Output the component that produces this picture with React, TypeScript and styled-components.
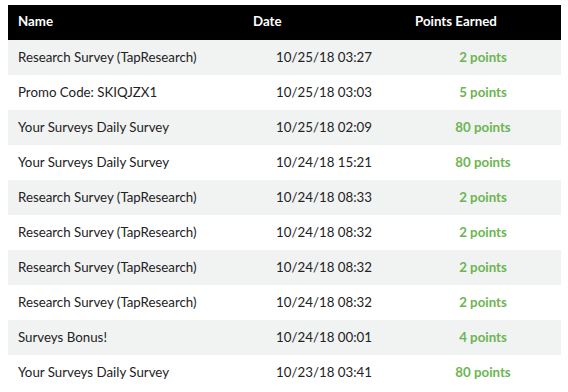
import React from "react";
import styled, { createGlobalStyle } from "styled-components";

const GlobalStyle = createGlobalStyle`
  html, body {
    margin: 0;
    padding: 0;
    background: #ffffff;
  }
  body {
    font-family: "Lato", "Liberation Sans", sans-serif;
  }
`;

const Page = styled.div`
  padding: 5px 7px 0 8px;
`;

const Table = styled.table`
  width: 553px;
  border-collapse: collapse;
  table-layout: fixed;
  font-size: 13.3px;
  color: #222222;
`;

const HeadCell = styled.th<{ $width: number }>`
  width: ${(p) => p.$width}px;
  height: 35px;
  padding: 0 0 3px 10px;
  background: #000000;
  color: #ffffff;
  font-weight: 700;
  text-align: left;
  box-sizing: border-box;
`;

const Row = styled.tr<{ $shaded: boolean }>`
  background: ${(p) => (p.$shaded ? "#f1f2f2" : "#ffffff")};
`;

const Cell = styled.td<{ $align?: "left" | "center" }>`
  height: 35px;
  padding: 0 0 2px ${(p) => (p.$align === "center" ? 0 : 10)}px;
  text-align: ${(p) => p.$align ?? "left"};
  box-sizing: border-box;
  white-space: nowrap;
`;

const Points = styled(Cell)`
  color: #6cb552;
  font-weight: 700;
`;

const rows = [
  ["Research Survey (TapResearch)", "10/25/18 03:27", "2 points"],
  ["Promo Code: SKIQJZX1", "10/25/18 03:03", "5 points"],
  ["Your Surveys Daily Survey", "10/25/18 02:09", "80 points"],
  ["Your Surveys Daily Survey", "10/24/18 15:21", "80 points"],
  ["Research Survey (TapResearch)", "10/24/18 08:33", "2 points"],
  ["Research Survey (TapResearch)", "10/24/18 08:32", "2 points"],
  ["Research Survey (TapResearch)", "10/24/18 08:32", "2 points"],
  ["Research Survey (TapResearch)", "10/24/18 08:32", "2 points"],
  ["Surveys Bonus!", "10/24/18 00:01", "4 points"],
  ["Your Surveys Daily Survey", "10/23/18 03:41", "80 points"],
];

export default function App() {
  return (
    <>
      <GlobalStyle />
      <Page>
        <Table>
          <thead>
            <tr>
              <HeadCell $width={235}>Name</HeadCell>
              <HeadCell $width={162}>Date</HeadCell>
              <HeadCell $width={156}>Points Earned</HeadCell>
            </tr>
          </thead>
          <tbody>
            {rows.map(([name, date, points], i) => (
              <Row key={i} $shaded={i % 2 === 0}>
                <Cell>{name}</Cell>
                <Cell $align="center">{date}</Cell>
                <Points $align="center">{points}</Points>
              </Row>
            ))}
          </tbody>
        </Table>
      </Page>
    </>
  );
}
